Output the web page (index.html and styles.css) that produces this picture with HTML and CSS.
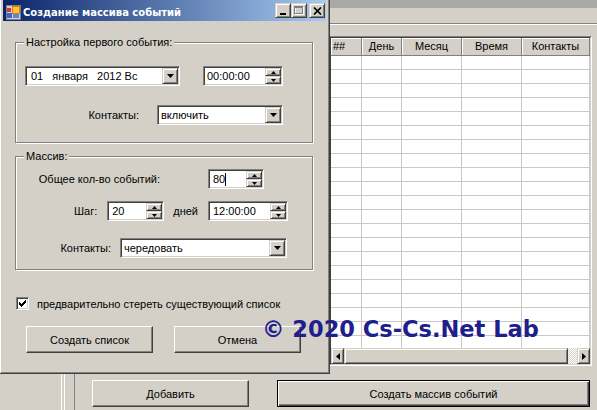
FILE: index.html
```html
<!DOCTYPE html>
<html lang="ru">
<head>
<meta charset="utf-8">
<title>Создание массива событий</title>
<link rel="stylesheet" href="styles.css">
</head>
<body>
<div class="screen">
  <div class="app">
    <div class="app-caption"></div>
    <div class="app-menu"></div>
    <div class="app-body">
      <div class="left-pane"></div>
      <div class="splitter"></div>
      <div class="main">
        <div class="grid">
          <div class="grid-inner">
            <div class="grid-view">
              <div class="grid-row grid-head">
                <div class="hcell hcell-left">##</div>
                <div class="hcell">День</div>
                <div class="hcell">Месяц</div>
                <div class="hcell">Время</div>
                <div class="hcell">Контакты</div>
              </div>
              <div class="grid-row"><div class="cell"></div><div class="cell"></div><div class="cell"></div><div class="cell"></div><div class="cell"></div></div>
              <div class="grid-row"><div class="cell"></div><div class="cell"></div><div class="cell"></div><div class="cell"></div><div class="cell"></div></div>
              <div class="grid-row"><div class="cell"></div><div class="cell"></div><div class="cell"></div><div class="cell"></div><div class="cell"></div></div>
              <div class="grid-row"><div class="cell"></div><div class="cell"></div><div class="cell"></div><div class="cell"></div><div class="cell"></div></div>
              <div class="grid-row"><div class="cell"></div><div class="cell"></div><div class="cell"></div><div class="cell"></div><div class="cell"></div></div>
              <div class="grid-row"><div class="cell"></div><div class="cell"></div><div class="cell"></div><div class="cell"></div><div class="cell"></div></div>
              <div class="grid-row"><div class="cell"></div><div class="cell"></div><div class="cell"></div><div class="cell"></div><div class="cell"></div></div>
              <div class="grid-row"><div class="cell"></div><div class="cell"></div><div class="cell"></div><div class="cell"></div><div class="cell"></div></div>
              <div class="grid-row"><div class="cell"></div><div class="cell"></div><div class="cell"></div><div class="cell"></div><div class="cell"></div></div>
              <div class="grid-row"><div class="cell"></div><div class="cell"></div><div class="cell"></div><div class="cell"></div><div class="cell"></div></div>
              <div class="grid-row"><div class="cell"></div><div class="cell"></div><div class="cell"></div><div class="cell"></div><div class="cell"></div></div>
              <div class="grid-row"><div class="cell"></div><div class="cell"></div><div class="cell"></div><div class="cell"></div><div class="cell"></div></div>
              <div class="grid-row"><div class="cell"></div><div class="cell"></div><div class="cell"></div><div class="cell"></div><div class="cell"></div></div>
              <div class="grid-row"><div class="cell"></div><div class="cell"></div><div class="cell"></div><div class="cell"></div><div class="cell"></div></div>
              <div class="grid-row"><div class="cell"></div><div class="cell"></div><div class="cell"></div><div class="cell"></div><div class="cell"></div></div>
              <div class="grid-row"><div class="cell"></div><div class="cell"></div><div class="cell"></div><div class="cell"></div><div class="cell"></div></div>
              <div class="grid-row"><div class="cell"></div><div class="cell"></div><div class="cell"></div><div class="cell"></div><div class="cell"></div></div>
              <div class="grid-row"><div class="cell"></div><div class="cell"></div><div class="cell"></div><div class="cell"></div><div class="cell"></div></div>
              <div class="grid-row"><div class="cell"></div><div class="cell"></div><div class="cell"></div><div class="cell"></div><div class="cell"></div></div>
              <div class="grid-row"><div class="cell"></div><div class="cell"></div><div class="cell"></div><div class="cell"></div><div class="cell"></div></div>
              <div class="grid-row"><div class="cell"></div><div class="cell"></div><div class="cell"></div><div class="cell"></div><div class="cell"></div></div>
            </div>
            <div class="hscroll">
              <div class="raised sb-btn"><svg width="4" height="7" viewBox="0 0 4 7"><polygon points="4,0 0,3.5 4,7" fill="#000"/></svg></div>
              <div class="raised sb-thumb"></div>
              <div class="sb-track"></div>
              <div class="raised sb-btn"><svg width="4" height="7" viewBox="0 0 4 7"><polygon points="0,0 4,3.5 0,7" fill="#000"/></svg></div>
            </div>
          </div>
        </div>
        <div class="app-buttons">
          <button class="btn btn-add">Добавить</button>
          <button class="btn btn-default btn-create">Создать массив событий</button>
        </div>
      </div>
    </div>
  </div>

  <div class="dialog">
    <div class="titlebar">
      <svg class="title-icon" width="16" height="16" viewBox="0 0 16 16" shape-rendering="crispEdges">
        <rect x="1" y="1" width="14" height="14" fill="#d4d0c8" stroke="#808080"/>
        <rect x="2" y="4" width="4" height="4" fill="#c83c3c"/>
        <rect x="7" y="2" width="7" height="7" fill="#f8c830" stroke="#e07818"/>
        <rect x="2" y="9" width="5" height="5" fill="#3a66c8"/>
        <rect x="8" y="10" width="6" height="4" fill="#5a8ae0"/>
      </svg>
      <span class="title-text">Создание массива событий</span>
      <div class="caption-btns">
        <span class="raised cap-btn"><svg width="8" height="8" viewBox="0 0 8 8" shape-rendering="crispEdges"><rect x="1" y="6" width="6" height="2" fill="#000"/></svg></span>
        <span class="raised cap-btn"><svg width="10" height="9" viewBox="0 0 10 9" shape-rendering="crispEdges"><rect x="1.5" y="1.5" width="8" height="7" fill="none" stroke="#fff"/><rect x="0.5" y="0.5" width="8" height="7" fill="none" stroke="#808080"/><rect x="0" y="1" width="9" height="1" fill="#808080"/></svg></span>
        <span class="raised cap-btn cap-close"><svg width="9" height="8" viewBox="0 0 9 8"><path d="M1 0.5 L8 7.5 M8 0.5 L1 7.5" stroke="#000" stroke-width="1.7"/></svg></span>
      </div>
    </div>
    <div class="client">
      <fieldset class="group group-first">
        <legend>Настройка первого события:</legend>
        <div class="row row-date">
          <div class="field combo-date">
            <span class="field-text"><span class="d-day">01</span><span class="d-month">января</span><span>2012 Вс</span></span>
            <span class="raised drop-btn"><svg width="7" height="4" viewBox="0 0 7 4"><polygon points="0,0 7,0 3.5,4" fill="#000"/></svg></span>
          </div>
          <div class="field spin-time">
            <span class="field-text">00:00:00</span>
            <span class="spin-btns">
              <span class="raised spin-btn"><svg width="5" height="3" viewBox="0 0 5 3"><polygon points="0,3 5,3 2.5,0" fill="#000"/></svg></span>
              <span class="raised spin-btn"><svg width="5" height="3" viewBox="0 0 5 3"><polygon points="0,0 5,0 2.5,3" fill="#000"/></svg></span>
            </span>
          </div>
        </div>
        <div class="row row-contacts1">
          <span class="lbl">Контакты:</span>
          <div class="field combo-inc">
            <span class="field-text">включить</span>
            <span class="raised drop-btn"><svg width="7" height="4" viewBox="0 0 7 4"><polygon points="0,0 7,0 3.5,4" fill="#000"/></svg></span>
          </div>
        </div>
      </fieldset>

      <fieldset class="group group-array">
        <legend>Массив:</legend>
        <div class="row row-count">
          <span class="lbl">Общее кол-во событий:</span>
          <div class="field spin-count">
            <span class="field-text">80<span class="caret"></span></span>
            <span class="spin-btns">
              <span class="raised spin-btn"><svg width="5" height="3" viewBox="0 0 5 3"><polygon points="0,3 5,3 2.5,0" fill="#000"/></svg></span>
              <span class="raised spin-btn"><svg width="5" height="3" viewBox="0 0 5 3"><polygon points="0,0 5,0 2.5,3" fill="#000"/></svg></span>
            </span>
          </div>
        </div>
        <div class="row row-step">
          <span class="lbl">Шаг:</span>
          <div class="field spin-step">
            <span class="field-text">20</span>
            <span class="spin-btns">
              <span class="raised spin-btn"><svg width="5" height="3" viewBox="0 0 5 3"><polygon points="0,3 5,3 2.5,0" fill="#000"/></svg></span>
              <span class="raised spin-btn"><svg width="5" height="3" viewBox="0 0 5 3"><polygon points="0,0 5,0 2.5,3" fill="#000"/></svg></span>
            </span>
          </div>
          <span class="lbl lbl-days">дней</span>
          <div class="field spin-time">
            <span class="field-text">12:00:00</span>
            <span class="spin-btns">
              <span class="raised spin-btn"><svg width="5" height="3" viewBox="0 0 5 3"><polygon points="0,3 5,3 2.5,0" fill="#000"/></svg></span>
              <span class="raised spin-btn"><svg width="5" height="3" viewBox="0 0 5 3"><polygon points="0,0 5,0 2.5,3" fill="#000"/></svg></span>
            </span>
          </div>
        </div>
        <div class="row row-contacts2">
          <span class="lbl">Контакты:</span>
          <div class="field combo-alt">
            <span class="field-text">чередовать</span>
            <span class="raised drop-btn"><svg width="7" height="4" viewBox="0 0 7 4"><polygon points="0,0 7,0 3.5,4" fill="#000"/></svg></span>
          </div>
        </div>
      </fieldset>

      <div class="check-row">
        <span class="checkbox"><svg width="7" height="7" viewBox="0 0 7 7" shape-rendering="crispEdges"><rect x="0" y="2" width="1" height="3"/><rect x="1" y="3" width="1" height="3"/><rect x="2" y="4" width="1" height="3"/><rect x="3" y="3" width="1" height="3"/><rect x="4" y="2" width="1" height="3"/><rect x="5" y="1" width="1" height="3"/><rect x="6" y="0" width="1" height="3"/></svg></span>
        <span class="check-label">предварительно стереть существующий список</span>
      </div>

      <div class="dialog-buttons">
        <button class="btn btn-dlg">Создать список</button>
        <button class="btn btn-dlg">Отмена</button>
      </div>
    </div>
  </div>

  <div class="watermark">© 2020 Cs-Cs.Net Lab</div>
</div>
</body>
</html>
```

FILE: styles.css
```css
* { box-sizing: border-box; }
html, body { margin: 0; padding: 0; }
body { background: #d4d0c8; }

.screen {
  position: relative;
  width: 597px;
  height: 410px;
  overflow: hidden;
  background: #d4d0c8;
  font-family: "Liberation Sans", Arial, sans-serif;
  font-size: 11px;
  color: #000;
}

/* ---------- classic 3D pieces ---------- */
.raised {
  background: #d4d0c8;
  border: 1px solid;
  border-color: #d4d0c8 #404040 #404040 #d4d0c8;
  box-shadow: inset 1px 1px 0 #fff, inset -1px -1px 0 #808080;
  display: flex;
  align-items: center;
  justify-content: center;
}

/* ---------- background application ---------- */
.app { height: 100%; display: flex; flex-direction: column; }
.app-caption { height: 8px; flex: none; background: #a8a8a8; }
.app-menu {
  height: 16px;
  flex: none;
  border-bottom: 1px solid #808080;
  box-shadow: 0 1px 0 #fff;
}
.app-body { flex: 1; min-height: 0; display: flex; padding-top: 12px; }
.left-pane { width: 61px; flex: none; }
.splitter {
  width: 14px;
  flex: none;
  border-left: 1px solid #fff;
  border-right: 1px solid #808080;
  box-shadow: inset 2px 0 0 #d4d0c8, inset 3px 0 0 #fff;
}
.main { flex: 1; min-width: 0; display: flex; flex-direction: column; }

.grid {
  margin-left: 254px;
  width: 263px;
  height: 330px;
  flex: none;
  border: 1px solid;
  border-color: #808080 #fff #fff #808080;
}
.grid-inner {
  height: 100%;
  border: 1px solid;
  border-color: #404040 #d4d0c8 #d4d0c8 #404040;
  display: flex;
  flex-direction: column;
}
.grid-view { flex: 1; min-height: 0; overflow: hidden; background: #fff; }
.grid-row {
  display: grid;
  grid-template-columns: 31px 40px 60px 60px 68px;
  height: 14px;
}
.cell { border-right: 1px solid #c8c8c8; border-bottom: 1px solid #c8c8c8; }
.grid-head { height: 18px; }
.hcell {
  background: #d4d0c8;
  border-right: 1px solid #808080;
  border-bottom: 1px solid #808080;
  box-shadow: inset 1px 1px 0 #fff;
  text-align: center;
  line-height: 17px;
  white-space: nowrap;
}
.hcell-left { text-align: left; padding-left: 2px; }

.hscroll { height: 16px; flex: none; display: flex; }
.sb-btn { width: 13px; flex: none; }
.sb-thumb { width: 224px; flex: none; }
.sb-track {
  flex: 1;
  background-color: #fff;
  background-image: repeating-conic-gradient(#d4d0c8 0 25%, #fff 0 50%);
  background-size: 2px 2px;
}

.app-buttons { display: flex; gap: 28px; margin-top: 14px; padding-left: 17px; }

.btn {
  font: inherit;
  color: #000;
  height: 27px;
  padding: 0;
  background: #d4d0c8;
  border: 1px solid;
  border-color: #fff #404040 #404040 #fff;
  box-shadow: inset -1px -1px 0 #808080;
}
.btn-add { width: 157px; }
.btn-create { width: 313px; }
.btn-default {
  border-color: #000;
  box-shadow: inset 1px 1px 0 #fff, inset -1px -1px 0 #404040, inset -2px -2px 0 #808080;
}

/* ---------- dialog window ---------- */
.dialog {
  position: absolute;
  left: -1px;
  top: -4px;
  width: 331px;
  height: 378px;
  background: #d4d0c8;
  border: 1px solid;
  border-color: #d4d0c8 #404040 #404040 #d4d0c8;
  box-shadow: inset 1px 1px 0 #fff, inset -1px -1px 0 #808080;
  padding: 3px;
  display: flex;
  flex-direction: column;
}
.titlebar {
  height: 21px;
  flex: none;
  display: flex;
  align-items: center;
  background: linear-gradient(to right, #0a246a, #a6caf0);
  color: #fff;
}
.title-icon { flex: none; margin-left: 2px; margin-top: 2px; }
.title-text {
  margin-left: 2px;
  margin-top: 4px;
  font-family: "DejaVu Sans", Verdana, sans-serif;
  font-weight: bold;
  font-size: 10px;
  white-space: nowrap;
}
.caption-btns { margin-left: auto; margin-right: 1px; display: flex; align-self: flex-start; margin-top: 3px; }
.cap-btn { width: 16px; height: 15px; }
.cap-close { margin-left: 2px; }

.client { flex: 1; padding-top: 15px; }

.group {
  margin: 0 0 0 12px;
  width: 298px;
  padding: 0;
  min-inline-size: auto;
  border: 1px solid #808080;
  box-shadow: 1px 1px 0 #fff, inset 1px 1px 0 #fff;
}
.group legend {
  margin-left: 8px;
  padding: 0 2px;
  line-height: 13px;
  background: #d4d0c8;
}
.group-first { padding-bottom: 17px; }
.group-array { margin-top: 7px; padding-bottom: 11px; }

.row { display: flex; align-items: center; justify-content: flex-end; }
.lbl { white-space: nowrap; }
.row-date { margin-top: 17px; padding-right: 29px; gap: 23px; }
.row-contacts1 { margin-top: 19px; padding-right: 29px; gap: 18px; }
.row-count { margin-top: 6px; padding-right: 48px; gap: 48px; }
.row-step { margin-top: 12px; padding-right: 24px; gap: 10px; }
.lbl-days { margin-left: -1px; }
.row-contacts2 { margin-top: 17px; padding-right: 25px; gap: 9px; }

.field {
  height: 20px;
  display: flex;
  background: #fff;
  border: 1px solid;
  border-color: #808080 #fff #fff #808080;
  padding: 1px;
  box-shadow: inset 1px 1px 0 #404040, inset -1px -1px 0 #d4d0c8;
}
.field-text {
  flex: 1;
  min-width: 0;
  padding-left: 2px;
  line-height: 16px;
  white-space: pre;
  display: flex;
  align-items: center;
}
.drop-btn { width: 16px; flex: none; }
.spin-btns { width: 16px; flex: none; display: flex; flex-direction: column; }
.spin-btn { flex: 1; }

.combo-date { width: 155px; }
.combo-date .field-text { padding-left: 4px; }
.d-day { margin-right: 9px; }
.d-month { margin-right: 9px; }
.spin-time { width: 80px; }
.combo-inc { width: 126px; }
.spin-count { width: 56px; }
.spin-count .field-text, .spin-step .field-text, .row-step .spin-time .field-text { padding-left: 3px; }
.spin-step { width: 57px; }
.combo-alt { width: 167px; }
.caret { width: 1px; height: 13px; background: #000; margin-left: 0; }

.check-row { display: flex; align-items: center; margin: 27px 0 0 13px; height: 13px; }
.checkbox {
  width: 13px;
  height: 13px;
  flex: none;
  background: #fff;
  border: 1px solid;
  border-color: #808080 #fff #fff #808080;
  box-shadow: inset 1px 1px 0 #404040, inset -1px -1px 0 #d4d0c8;
  display: flex;
  align-items: center;
  justify-content: center;
}
.check-label { margin-left: 8px; white-space: nowrap; }

.dialog-buttons { display: flex; gap: 21px; margin: 16px 0 0 23px; }
.btn-dlg { width: 127px; }

/* ---------- overlay watermark ---------- */
.watermark {
  position: absolute;
  left: 262px;
  top: 318px;
  font-family: "DejaVu Sans", Verdana, sans-serif;
  font-weight: bold;
  font-size: 22.5px;
  line-height: 1;
  color: #1e1e8c;
  white-space: nowrap;
}
```
